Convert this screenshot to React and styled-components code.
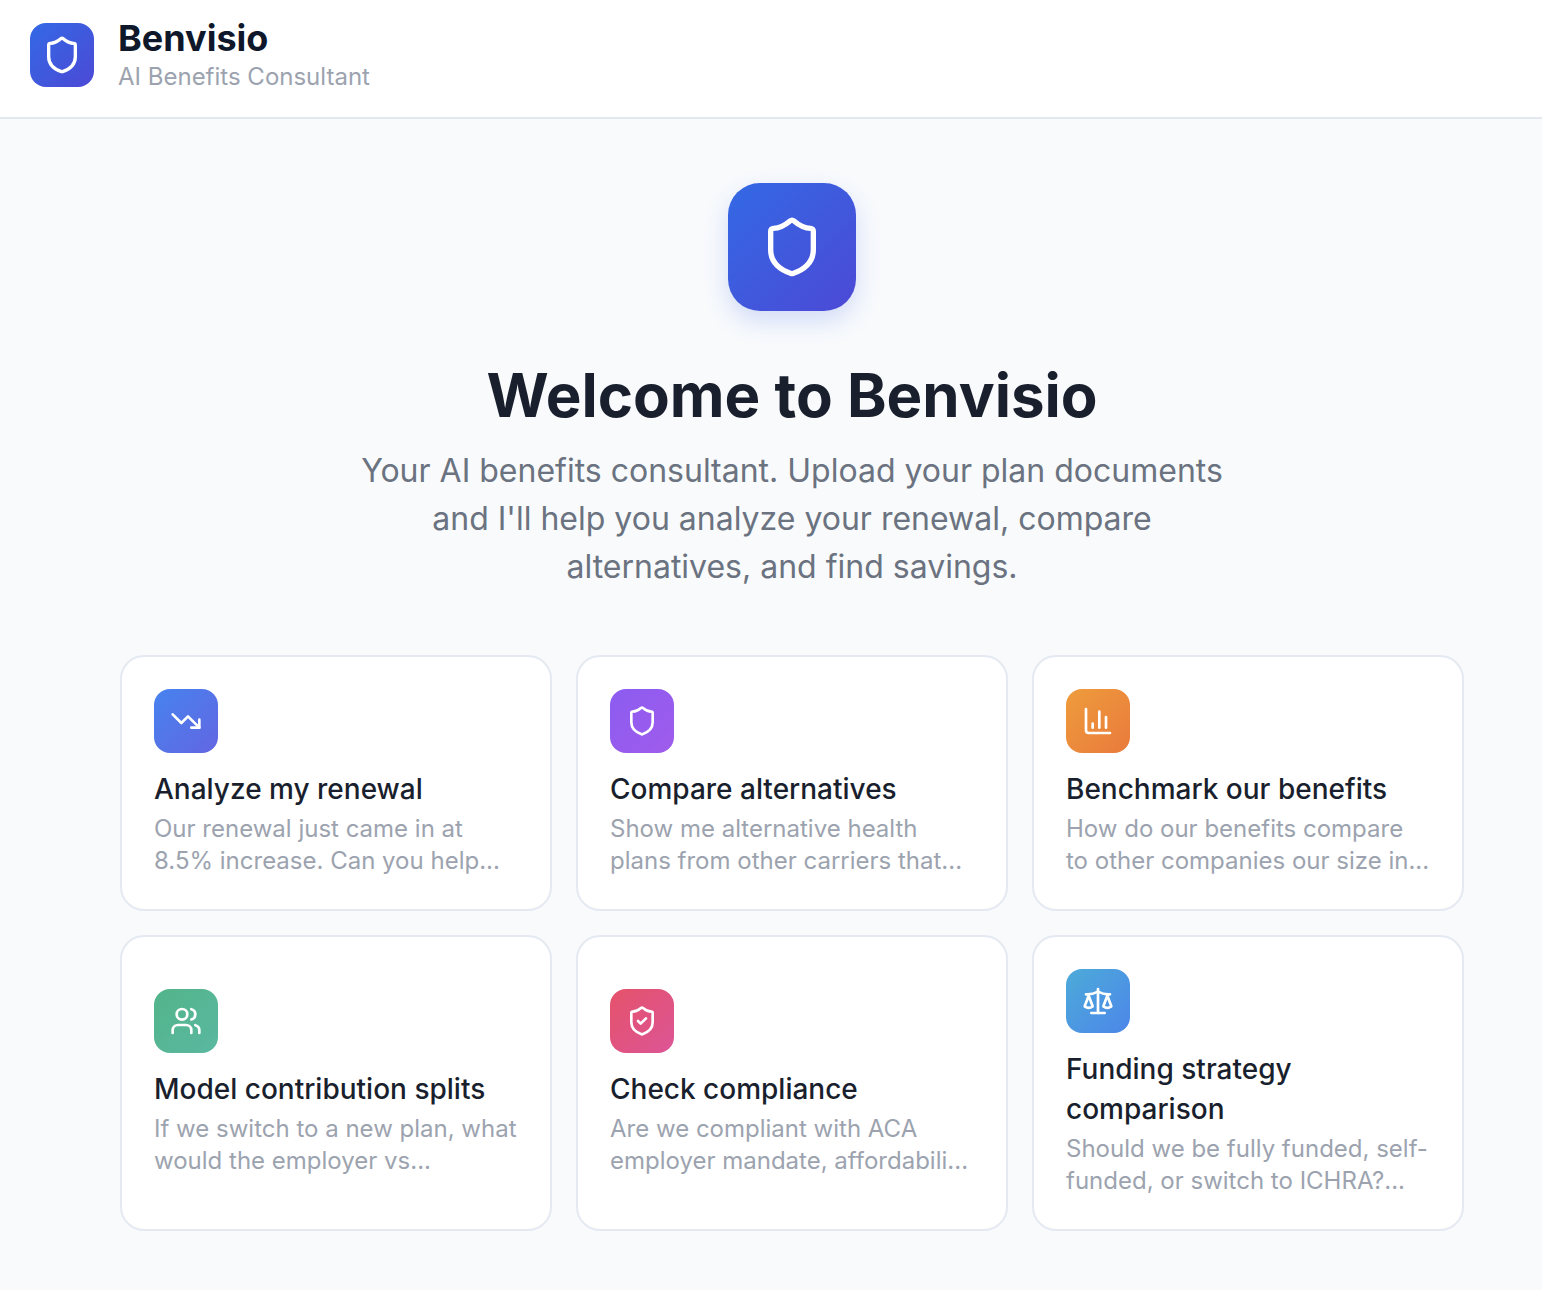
import React from 'react';
import styled, { createGlobalStyle } from 'styled-components';
import { Shield, TrendingDown, ChartColumn, Users, ShieldCheck, Scale } from 'lucide-react';

const Global = createGlobalStyle`
  html, body { margin: 0; padding: 0; background: #f8fafc; }
  body { font-family: Inter, "Liberation Sans", sans-serif; overflow-x: hidden; }
  * { box-sizing: border-box; }
`;

const Page = styled.div`
  min-height: 1290px;
  display: flex;
  flex-direction: column;
  background: #f8fafc;
`;

const Header = styled.header`
  height: 119px;
  display: flex;
  align-items: center;
  gap: 24px;
  padding: 0 30px 7px;
  background: #fff;
  border-bottom: 2px solid #e2e8f0;
`;

const LogoMark = styled.div`
  width: 64px;
  height: 64px;
  display: flex;
  align-items: center;
  justify-content: center;
  border-radius: 16px;
  background: linear-gradient(135deg, #3369e4, #4c49d6);
  color: #fff;
`;

const Brand = styled.div`
  display: flex;
  flex-direction: column;
  padding-bottom: 2px;
`;

const BrandName = styled.div`
  font-size: 36px;
  line-height: 46px;
  font-weight: 700;
  color: #0f172a;
`;

const BrandTag = styled.div`
  font-size: 24px;
  line-height: 32px;
  color: #9ca3af;
`;

const Main = styled.main`
  display: flex;
  flex-direction: column;
  align-items: center;
  padding: 64px 78px 0 120px;
`;

const HeroMark = styled.div`
  width: 128px;
  height: 128px;
  display: flex;
  align-items: center;
  justify-content: center;
  border-radius: 32px;
  background: linear-gradient(135deg, #3369e4, #4c49d6);
  box-shadow: 0 10px 24px rgba(59, 102, 229, 0.2);
  color: #fff;
`;

const Heading = styled.h1`
  margin: 48px 0 0;
  font-size: 60px;
  line-height: 72px;
  font-weight: 700;
  color: #1a1f2e;
`;

const Lead = styled.p`
  margin: 16px 0 0;
  width: 880px;
  font-size: 32px;
  line-height: 48px;
  text-align: center;
  color: #6b7280;
`;

const Grid = styled.div`
  margin-top: 64px;
  width: 100%;
  display: grid;
  grid-template-columns: repeat(3, 432px);
  gap: 24px;
`;

const Card = styled.div`
  display: flex;
  flex-direction: column;
  justify-content: center;
  padding: 32px;
  background: #fff;
  border: 2px solid #e5e9f2;
  border-radius: 24px;
`;

const IconBadge = styled.div`
  width: 64px;
  height: 64px;
  display: flex;
  align-items: center;
  justify-content: center;
  border-radius: 16px;
  color: #fff;
  background: linear-gradient(135deg, ${p => p.$from}, ${p => p.$to});
`;

const CardTitle = styled.div`
  margin-top: 16px;
  font-size: 28px;
  line-height: 40px;
  font-weight: 500;
  color: #1a1f2e;
`;

const CardText = styled.div`
  margin-top: 4px;
  font-size: 24px;
  line-height: 32px;
  color: #9ca3af;
`;

const items = [
  { Icon: TrendingDown, from: '#4683ef', to: '#6366e1', title: 'Analyze my renewal', text: 'Our renewal just came in at 8.5% increase. Can you help...' },
  { Icon: Shield, from: '#8b5cf0', to: '#a05cec', title: 'Compare alternatives', text: 'Show me alternative health plans from other carriers that...' },
  { Icon: ChartColumn, from: '#ee9c3c', to: '#e97a3c', title: 'Benchmark our benefits', text: 'How do our benefits compare to other companies our size in...' },
  { Icon: Users, from: '#52b48a', to: '#5ab8a0', title: 'Model contribution splits', text: 'If we switch to a new plan, what would the employer vs...' },
  { Icon: ShieldCheck, from: '#e5526a', to: '#dc5596', title: 'Check compliance', text: 'Are we compliant with ACA employer mandate, affordabili...' },
  { Icon: Scale, from: '#4cabd8', to: '#4d86ea', title: 'Funding strategy comparison', text: 'Should we be fully funded, self-funded, or switch to ICHRA?...' },
];

export default function App() {
  return (
    <Page>
      <Global />
      <Header>
        <LogoMark><Shield size={40} strokeWidth={2} /></LogoMark>
        <Brand>
          <BrandName>Benvisio</BrandName>
          <BrandTag>AI Benefits Consultant</BrandTag>
        </Brand>
      </Header>
      <Main>
        <HeroMark><Shield size={64} strokeWidth={2} /></HeroMark>
        <Heading>Welcome to Benvisio</Heading>
        <Lead>Your AI benefits consultant. Upload your plan documents and I'll help you analyze your renewal, compare alternatives, and find savings.</Lead>
        <Grid>
          {items.map(({ Icon, from, to, title, text }) => (
            <Card key={title}>
              <IconBadge $from={from} $to={to}><Icon size={32} strokeWidth={2} /></IconBadge>
              <CardTitle>{title}</CardTitle>
              <CardText>{text}</CardText>
            </Card>
          ))}
        </Grid>
      </Main>
    </Page>
  );
}
